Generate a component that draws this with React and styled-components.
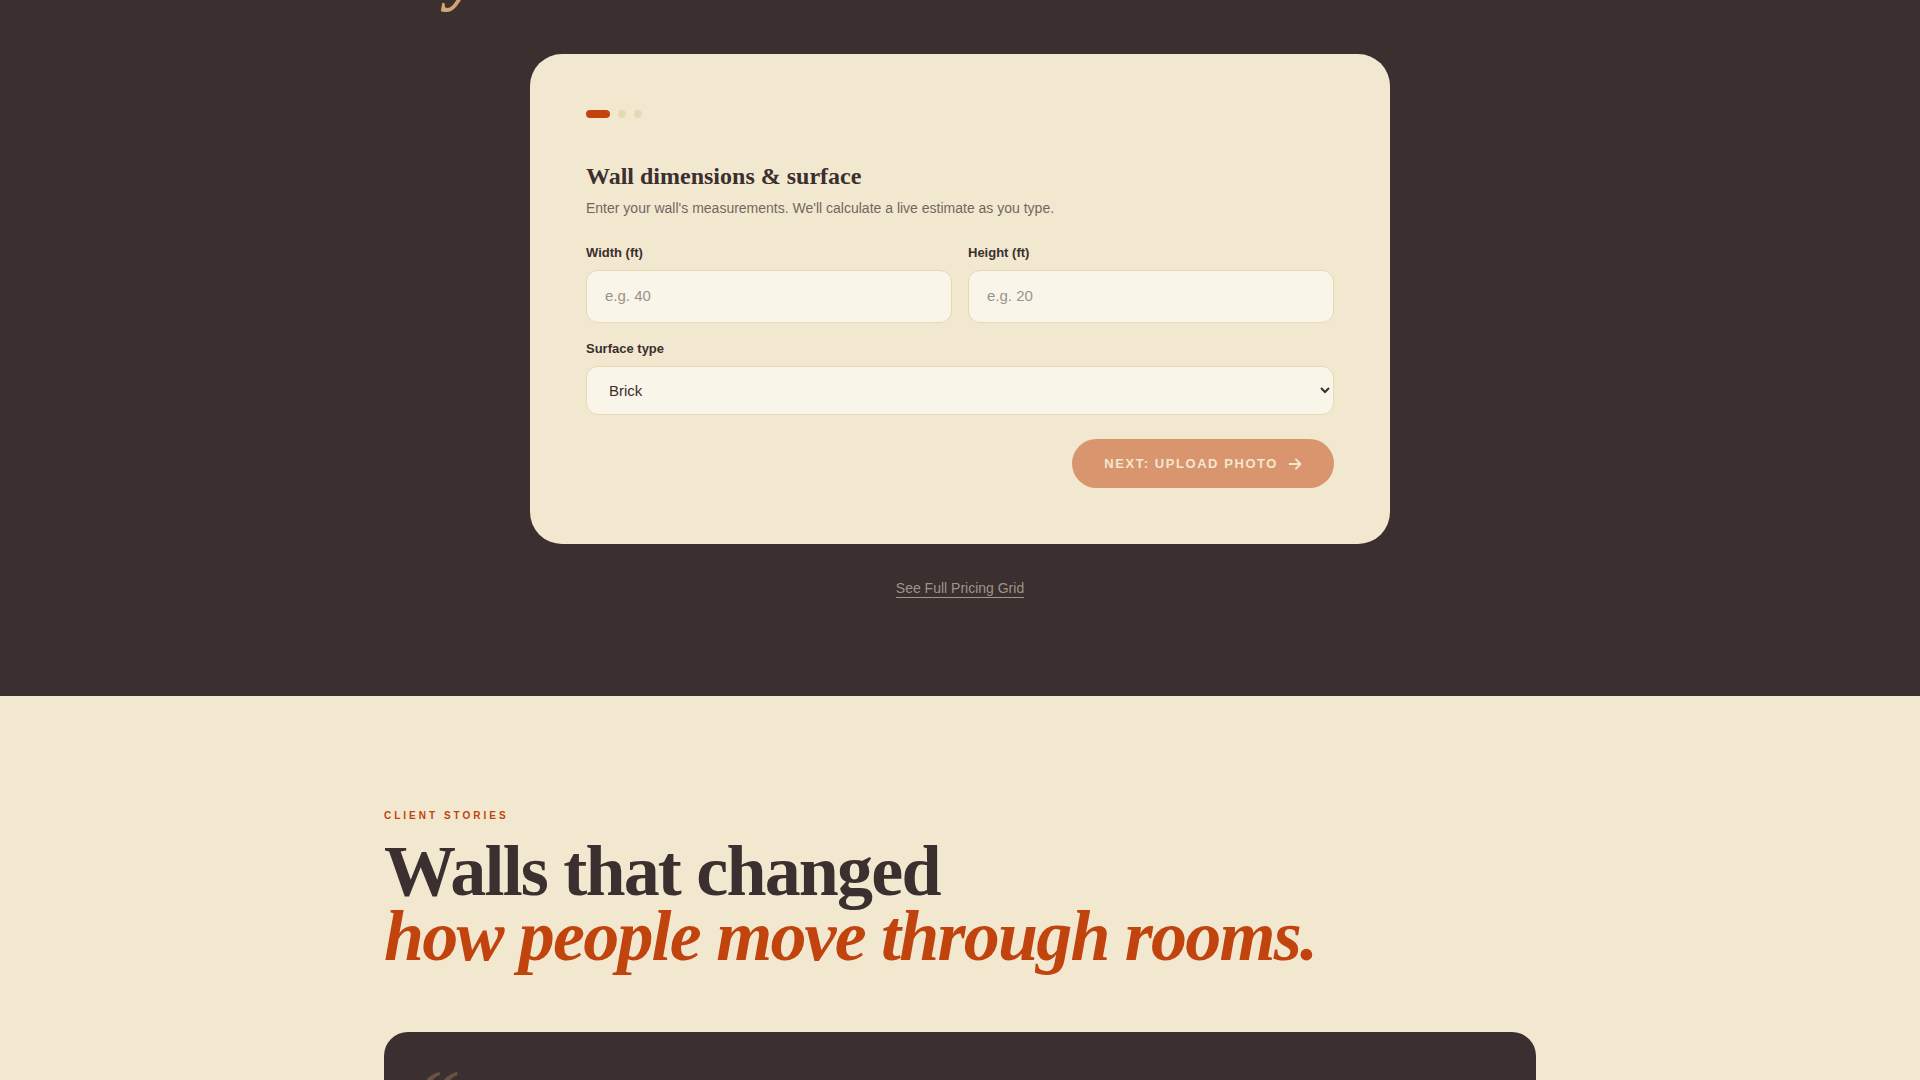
import React, { useState } from 'react';
import styled, { createGlobalStyle } from 'styled-components';

const GlobalStyle = createGlobalStyle`
    * {
        box-sizing: border-box;
    }
    html, body {
        margin: 0;
        height: 100%;
        overflow: hidden;
    }
    body {
        background-color: #F2E8CF;
        color: #3B2F2F;
        font-family: "Liberation Sans", Arial, sans-serif;
    }
`;
const Page = styled.div`
    display: flex;
    flex-direction: column;
`;
const EstimateSection = styled.section`
    display: flex;
    flex-direction: column;
    align-items: center;
    padding: 0 24px 98px;
    background-color: #3B2F2F;
`;
const Container = styled.div`
    width: 100%;
    max-width: 1152px;
    margin: 0 auto;
`;
const Title = styled.h2`
    margin: 0;
    font-family: "Liberation Serif", "Times New Roman", serif;
    font-size: 72px;
    font-weight: 700;
    line-height: 65px;
    letter-spacing: -0.025em;
`;
const EstimateTitle = styled(Title)`
    margin: -59px 0 48px;
    padding-left: 64px;
    color: #D4A373;
`;
const Card = styled.form`
    width: 100%;
    max-width: 860px;
    padding: 56px;
    border-radius: 32px;
    background-color: #F2E8CF;
`;
const Steps = styled.div`
    display: flex;
    gap: 8px;
    margin-bottom: 40px;
`;
const Step = styled.span`
    width: ${props => props.$active ? '24px' : '8px'};
    height: 8px;
    border-radius: 4px;
    background-color: ${props => props.$active ? '#C1440E' : '#E8D9B5'};
`;
const CardTitle = styled.h3`
    margin: 0 0 4px;
    font-family: "Liberation Serif", "Times New Roman", serif;
    font-size: 24px;
    line-height: 36px;
`;
const CardText = styled.p`
    margin: 0 0 24px;
    font-size: 14px;
    line-height: 21px;
    opacity: 0.7;
`;
const Fields = styled.div`
    display: grid;
    grid-template-columns: 1fr 1fr;
    gap: 16px;
    margin-bottom: 24px;
`;
const Field = styled.div`
    display: flex;
    flex-direction: column;
    gap: 8px;
    grid-column: ${props => props.$wide ? '1 / -1' : 'auto'};
`;
const Label = styled.label`
    font-size: 13px;
    font-weight: 700;
    line-height: 19px;
`;
const Input = styled.input`
    width: 100%;
    padding: 16px 18px 18px;
    border: 1px solid #E8D9B5;
    border-radius: 12px;
    background-color: #FAF5E9;
    color: #3B2F2F;
    font-family: inherit;
    font-size: 15px;

    &::placeholder {
        color: #3B2F2F;
        opacity: 0.5;
    }
`;
const Select = styled.select`
    width: 100%;
    padding: 14px 18px;
    border: 1px solid #E8D9B5;
    border-radius: 12px;
    background-color: #FAF5E9;
    color: #3B2F2F;
    font-family: inherit;
    font-size: 15px;
`;
const Actions = styled.div`
    display: flex;
    justify-content: flex-end;
`;
const NextButton = styled.button`
    display: inline-flex;
    align-items: center;
    gap: 10px;
    padding: 16px 32px;
    border: none;
    border-radius: 25px;
    background-color: #C1440E;
    color: #F2E8CF;
    font-family: inherit;
    font-size: 13px;
    font-weight: 700;
    line-height: 17px;
    letter-spacing: 0.12em;
    text-transform: uppercase;
    opacity: 0.5;
`;
const PricingLink = styled.a`
    margin-top: 36px;
    border-bottom: 1px solid currentColor;
    color: #9D948C;
    font-size: 14px;
    line-height: 17px;
    text-decoration: none;
`;
const StoriesSection = styled.section`
    padding: 112px 24px 0;
`;
const Eyebrow = styled.p`
    margin: 0 0 16px;
    color: #C1440E;
    font-size: 10px;
    font-weight: 700;
    line-height: 15px;
    letter-spacing: 3px;
    text-transform: uppercase;
`;
const StoriesTitle = styled(Title)`
    margin-bottom: 63px;

    em {
        display: block;
        color: #C1440E;
    }
`;
const StoryCard = styled.article`
    padding: 26px 36px;
    border-radius: 24px;
    background-color: #3B2F2F;
`;
const QuoteMark = styled.div`
    color: #D4A373;
    font-family: "Liberation Serif", "Times New Roman", serif;
    font-size: 80px;
    font-weight: 700;
    line-height: 80px;
    opacity: 0.3;
`;

const steps = ['dimensions', 'photo', 'estimate'];
const surfaces = ['Brick', 'Concrete', 'Drywall', 'Wood'];

const Arrow = () => (
    <svg
        width="14"
        height="14"
        viewBox="0 0 14 14"
        fill="none"
        stroke="currentColor"
        strokeWidth="1.8"
        strokeLinecap="round"
        strokeLinejoin="round"
        aria-hidden="true"
    >
        <path d="M1.5 7h11M8 2.5L12.5 7L8 11.5" />
    </svg>
);

export default function App() {
    const [width, setWidth] = useState('');
    const [height, setHeight] = useState('');
    const [surface, setSurface] = useState('Brick');

    return (
        <Page>
            <GlobalStyle />
            <EstimateSection>
                <Container>
                    <EstimateTitle><em>y</em></EstimateTitle>
                </Container>
                <Card onSubmit={e => e.preventDefault()}>
                    <Steps>
                        {steps.map((step, index) => <Step key={step} $active={index === 0} />)}
                    </Steps>
                    <CardTitle>Wall dimensions &amp; surface</CardTitle>
                    <CardText>Enter your wall's measurements. We'll calculate a live estimate as you type.</CardText>
                    <Fields>
                        <Field>
                            <Label htmlFor="width">Width (ft)</Label>
                            <Input
                                id="width"
                                type="number"
                                placeholder="e.g. 40"
                                value={width}
                                onChange={e => setWidth(e.target.value)}
                            />
                        </Field>
                        <Field>
                            <Label htmlFor="height">Height (ft)</Label>
                            <Input
                                id="height"
                                type="number"
                                placeholder="e.g. 20"
                                value={height}
                                onChange={e => setHeight(e.target.value)}
                            />
                        </Field>
                        <Field $wide>
                            <Label htmlFor="surface">Surface type</Label>
                            <Select id="surface" value={surface} onChange={e => setSurface(e.target.value)}>
                                {surfaces.map(name => <option key={name}>{name}</option>)}
                            </Select>
                        </Field>
                    </Fields>
                    <Actions>
                        <NextButton type="submit" disabled={!width || !height}>
                            Next: Upload Photo
                            <Arrow />
                        </NextButton>
                    </Actions>
                </Card>
                <PricingLink href="#pricing">See Full Pricing Grid</PricingLink>
            </EstimateSection>

            <StoriesSection>
                <Container>
                    <Eyebrow>Client Stories</Eyebrow>
                    <StoriesTitle>
                        Walls that changed
                        <em>how people move through rooms.</em>
                    </StoriesTitle>
                    <StoryCard>
                        <QuoteMark>“</QuoteMark>
                    </StoryCard>
                </Container>
            </StoriesSection>
        </Page>
    );
}
